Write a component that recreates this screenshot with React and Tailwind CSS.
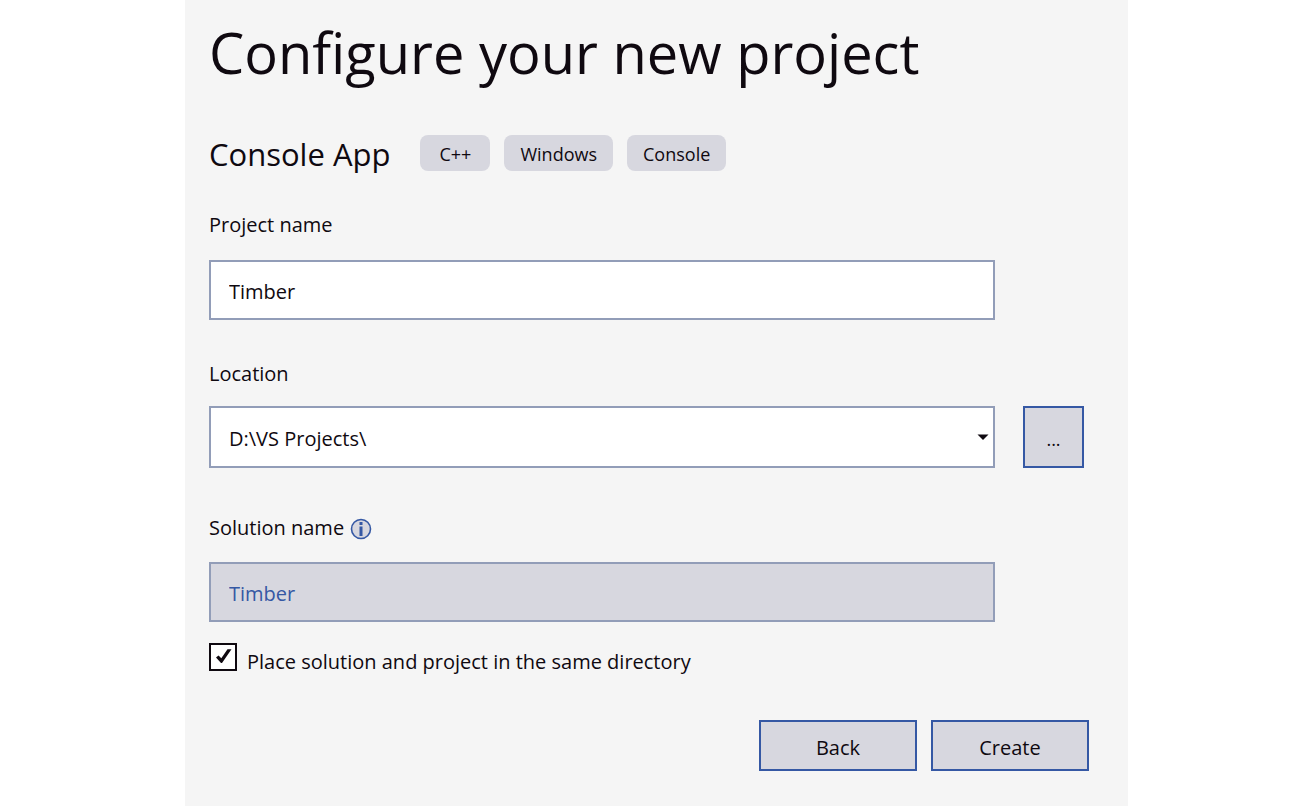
import { useState } from "react";

const TAGS = ["C++", "Windows", "Console"];

function InfoIcon() {
  return (
    <svg viewBox="0 0 22 22" className="mt-0.5 size-[22px]" aria-hidden="true">
      <circle cx="11" cy="11" r="9.5" fill="#d7d7df" stroke="#3558a4" strokeWidth="1.6" />
      <rect x="9.5" y="4" width="3" height="3" fill="#3558a4" />
      <rect x="9.5" y="8.5" width="3" height="9.5" fill="#3558a4" />
    </svg>
  );
}

export default function App() {
  const [name, setName] = useState("Timber");
  const [same, setSame] = useState(true);

  return (
    <div className="min-h-screen bg-white font-['Open_Sans',sans-serif] text-xl text-[#0f0910]">
      <main className="mx-auto min-h-screen max-w-[943px] bg-[#f5f5f5] pt-4 pr-11 pb-9 pl-6">
        <h1 className="text-[56px] leading-[72px]">Configure your new project</h1>

        <div className="mt-[47px] flex items-center">
          <h2 className="pt-0.5 text-[31px] leading-[34px]">Console App</h2>
          <ul className="ml-[30px] flex gap-3.5 text-lg leading-[34px]">
            {TAGS.map((tag) => (
              <li key={tag} className="min-w-[70px] rounded-lg bg-[#d7d7df] px-4 pt-0.5 text-center">
                {tag}
              </li>
            ))}
          </ul>
        </div>

        <form onSubmit={(e) => e.preventDefault()}>
          <div className="mr-[89px]">
            <label htmlFor="project" className="mt-10 block leading-7">
              Project name
            </label>
            <input
              id="project"
              value={name}
              onChange={(e) => setName(e.target.value)}
              className="mt-[21px] h-[60px] w-full border-2 border-[#929db8] bg-white px-[18px] pt-0.5 outline-none"
            />
          </div>

          <label htmlFor="location" className="mt-10 block leading-7">
            Location
          </label>
          <div className="mt-[18px] flex gap-7">
            <div className="relative flex-1">
              <select
                id="location"
                className="h-[62px] w-full appearance-none border-2 border-[#929db8] bg-white px-[18px] pt-1 outline-none"
              >
                <option>D:\VS Projects\</option>
              </select>
              <svg
                viewBox="0 0 12 6"
                className="pointer-events-none absolute top-7 right-1.5 h-1.5 w-3"
                aria-hidden="true"
              >
                <path d="M0.5 0.5H11.5L6 6Z" fill="#0f0910" />
              </svg>
            </div>
            <button
              type="button"
              aria-label="Browse"
              className="h-[62px] w-[61px] border-2 border-[#3558a4] bg-[#d7d7df] pt-1 text-lg"
            >
              ...
            </button>
          </div>

          <div className="mr-[89px]">
            <div className="mt-[46px] flex items-center gap-1.5">
              <label htmlFor="solution" className="leading-7">
                Solution name
              </label>
              <InfoIcon />
            </div>
            <input
              id="solution"
              value={name}
              disabled
              className="mt-5 h-[60px] w-full border-2 border-[#929db8] bg-[#d7d7df] px-[18px] pt-0.5 text-[#3558a4]"
            />
          </div>

          <div className="mt-[21px] flex items-start gap-2.5">
            <span className="grid size-7">
              <input
                id="same-directory"
                type="checkbox"
                checked={same}
                onChange={(e) => setSame(e.target.checked)}
                className="col-start-1 row-start-1 size-7 appearance-none border-2 border-[#0f0910] bg-white"
              />
              {same && (
                <svg
                  viewBox="0 0 28 28"
                  className="pointer-events-none col-start-1 row-start-1 size-7"
                  aria-hidden="true"
                >
                  <path d="M7 14.5L9.5 12.5L12.3 15.2L18.5 6.2H22.5L13 20H12Z" fill="#0f0910" />
                </svg>
              )}
            </span>
            <label htmlFor="same-directory" className="pt-1 leading-[30px]">
              Place solution and project in the same directory
            </label>
          </div>

          <div className="-mr-[5px] mt-[43px] flex justify-end gap-3.5">
            <button type="button" className="h-[51px] w-[158px] border-2 border-[#3558a4] bg-[#d7d7df] pt-1">
              Back
            </button>
            <button type="submit" className="h-[51px] w-[158px] border-2 border-[#3558a4] bg-[#d7d7df] pt-1">
              Create
            </button>
          </div>
        </form>
      </main>
    </div>
  );
}
